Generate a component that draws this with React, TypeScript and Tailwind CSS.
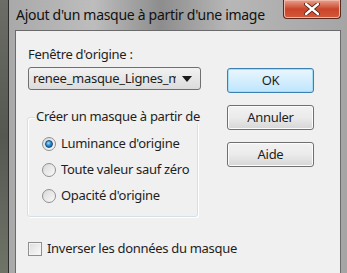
import React from 'react'

function Radio({ checked, label }: { checked?: boolean; label: string }) {
    return (
        <div className="flex h-[26px] items-center gap-[5px] whitespace-nowrap">
            <span className="flex h-[14px] w-[14px] shrink-0 items-center justify-center rounded-full border border-[#8e8f8f] bg-gradient-to-br from-[#d8d8d8] to-[#fafafa]">
                {checked && (
                    <span className="h-[8px] w-[8px] rounded-full border border-[#1a4a78] bg-[radial-gradient(circle_at_40%_35%,#9fe0ff_0%,#2b8ed8_45%,#0d4d8c_100%)]" />
                )}
            </span>
            <span>{label}</span>
        </div>
    )
}

function Button({ label, primary }: { label: string; primary?: boolean }) {
    return (
        <button
            className={
                'h-[25px] w-[87px] rounded-[3px] border text-center ' +
                (primary
                    ? 'border-[#3c7fb1] bg-gradient-to-b from-[#eaf6fd] to-[#bee6fd] shadow-[inset_0_0_0_1px_#a6dcf7]'
                    : 'border-[#707070] bg-gradient-to-b from-[#f2f2f2] via-[#ebebeb] to-[#d6d6d6] shadow-[inset_0_0_0_1px_#fcfcfc]')
            }
        >
            {label}
        </button>
    )
}

export default function App() {
    return (
        <div
            className="flex h-[273px] w-[347px] overflow-hidden bg-[#50524c] text-[13px] tracking-[-0.3px] text-[#1e1e1e]"
            style={{ fontFamily: '"Noto Sans", "Open Sans", sans-serif' }}
        >
            <div className="w-[8px] bg-gradient-to-b from-[#6b6d66] via-[#555751] to-[#6f7468]" />
            <div className="flex flex-1 flex-col border-l border-[#2e2e2e] bg-[linear-gradient(90deg,#a9a9a9_0%,#bdbdbd_25%,#8d8d8d_45%,#b7b7b7_65%,#a5a5a5_100%)] pl-[6px] pr-[6px]">
                <div className="flex h-[30px] items-start justify-between">
                    <span className="mt-[6px] whitespace-nowrap pl-[1px] text-[14px] leading-[18px] text-[#111]">
                        Ajout d'un masque à partir d'une image
                    </span>
                    <div className="mr-[-6px] pr-[6px]">
                        <div className="flex h-[19px] w-[58px] items-center justify-center rounded-b-[4px] border border-t-0 border-[#5a2a20] bg-gradient-to-b from-[#e8a08c] via-[#c8452a] to-[#d6573a] shadow-[inset_0_0_0_1px_#f0b8a8]">
                            <svg width="16" height="12" viewBox="0 0 16 12">
                                <path
                                    d="M2 1 L14 11 M14 1 L2 11"
                                    stroke="#4a1a10"
                                    strokeWidth="4"
                                    strokeLinecap="round"
                                />
                                <path
                                    d="M2 1 L14 11 M14 1 L2 11"
                                    stroke="#fff"
                                    strokeWidth="2.4"
                                    strokeLinecap="round"
                                />
                            </svg>
                        </div>
                    </div>
                </div>
                <div className="flex flex-1 border border-b-0 border-[#6a6a6a] bg-[#f0f0f0]">
                    <div className="flex w-[198px] shrink-0 flex-col pl-[12px]">
                        <div className="mt-[15px] h-[16px] whitespace-nowrap leading-[16px]">Fenêtre d'origine :</div>
                        <div className="mt-[5px] flex h-[23px] w-[173px] items-center justify-between rounded-[3px] border border-[#707070] bg-gradient-to-b from-[#f2f2f2] to-[#dcdcdc] pl-[4px] pr-[8px]">
                            <span className="overflow-hidden whitespace-nowrap">renee_masque_Lignes_m</span>
                            <svg width="10" height="6" viewBox="0 0 10 6" className="ml-[6px] shrink-0">
                                <path d="M0 0 L10 0 L5 6 Z" fill="#1a1a1a" />
                            </svg>
                        </div>
                        <div className="relative mt-[27px] ml-[-1px] h-[100px] w-[171px] rounded-[3px] border border-[#d5dfe5] pt-[13px] pl-[14px] shadow-[inset_1px_1px_0_#fff,1px_1px_0_#fff]">
                            <span className="absolute top-[-10px] left-[7px] whitespace-nowrap bg-[#f0f0f0] px-[1px] leading-[16px]">
                                Créer un masque à partir de
                            </span>
                            <Radio checked label="Luminance d'origine" />
                            <Radio label="Toute valeur sauf zéro" />
                            <Radio label="Opacité d'origine" />
                        </div>
                        <div className="mt-[22px] flex items-center gap-[5px] whitespace-nowrap">
                            <span className="h-[14px] w-[14px] shrink-0 border border-[#8e8f8f] bg-gradient-to-br from-[#dcdcdc] to-[#fbfbfb] shadow-[inset_0_0_0_1px_#f4f4f4]" />
                            <span>Inverser les données du masque</span>
                        </div>
                    </div>
                    <div className="ml-[13px] flex flex-col gap-[12px] pt-[37px]">
                        <Button primary label="OK" />
                        <Button label="Annuler" />
                        <Button label="Aide" />
                    </div>
                </div>
            </div>
        </div>
    )
}
